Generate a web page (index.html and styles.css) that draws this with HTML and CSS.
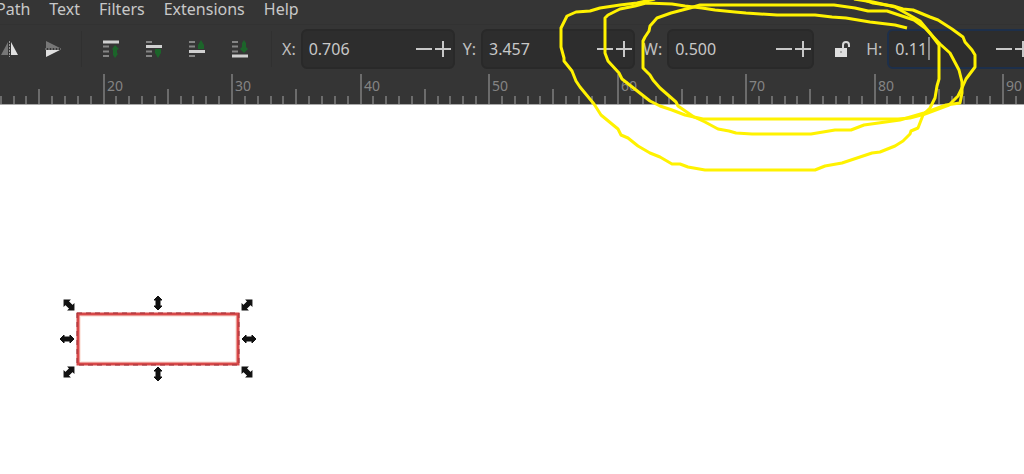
FILE: index.html
```html
<!DOCTYPE html>
<html lang="en">
<head>
    <meta charset="UTF-8">
    <meta name="viewport" content="width=device-width, initial-scale=1.0">
    <title>Drawing Editor</title>
    <link rel="stylesheet" href="styles.css">
</head>
<body>
    <nav class="menu-bar">
        <a href="#">Path</a>
        <a href="#">Text</a>
        <a href="#">Filters</a>
        <a href="#">Extensions</a>
        <a href="#">Help</a>
    </nav>

    <div class="toolbar">
        <div class="tool-group">
            <button class="tool" aria-label="Flip horizontal">
                <svg width="18" height="18" viewBox="0 0 18 18">
                    <path class="icon-dim" d="M8 2V15H1Z"/>
                    <path class="icon-light" d="M11 2V15H18Z"/>
                    <path class="icon-axis" d="M9.500 1V17"/>
                </svg>
            </button>
            <button class="tool" aria-label="Flip vertical">
                <svg width="18" height="18" viewBox="0 0 18 18">
                    <path class="icon-dim" d="M3 1V8H17Z"/>
                    <path class="icon-light" d="M3 10V17L17 10Z"/>
                    <path class="icon-axis" d="M2 9H18"/>
                </svg>
            </button>
        </div>
        <div class="tool-group order-group">
            <button class="tool" aria-label="Raise to top">
                <svg width="18" height="18" viewBox="0 0 18 18">
                    <path class="icon-rows" d="M1 6.500H7M1 11.500H7M1 16H7"/>
                    <path class="icon-bar" d="M1 2H17"/>
                    <path class="icon-arrow" d="M13 5L17 9L15 10V13L16 14L13 18L11 15V10L10 9Z"/>
                </svg>
            </button>
            <button class="tool" aria-label="Raise">
                <svg width="18" height="18" viewBox="0 0 18 18">
                    <path class="icon-rows" d="M1 2H7M1 11.500H7M1 16H7"/>
                    <path class="icon-bar" d="M1 6.500H17"/>
                    <path class="icon-arrow" d="M10 9H16V13L13 18L10 13Z"/>
                </svg>
            </button>
            <button class="tool" aria-label="Lower">
                <svg width="18" height="18" viewBox="0 0 18 18">
                    <path class="icon-rows" d="M1 2H7M1 6.500H7M1 16H7"/>
                    <path class="icon-bar" d="M1 11.500H17"/>
                    <path class="icon-arrow" d="M13 0L16 5V9H10V5Z"/>
                </svg>
            </button>
            <button class="tool" aria-label="Lower to bottom">
                <svg width="18" height="18" viewBox="0 0 18 18">
                    <path class="icon-rows" d="M1 2H7M1 6.500H7M1 11.500H7"/>
                    <path class="icon-bar" d="M1 16H17"/>
                    <path class="icon-arrow" d="M13 0L15 3V7L17 9L13 13L9 9L11 7V3Z"/>
                </svg>
            </button>
        </div>

        <div class="field">
            <label for="posX">X:</label>
            <div class="spin">
                <input type="text" id="posX" value="0.706">
                <button class="step" aria-label="Decrease X"><svg width="16" height="16"><path d="M0 8H16"/></svg></button>
                <button class="step" aria-label="Increase X"><svg width="16" height="16"><path d="M0 8H16M8 0V16"/></svg></button>
            </div>
        </div>
        <div class="field">
            <label for="posY">Y:</label>
            <div class="spin">
                <input type="text" id="posY" value="3.457">
                <button class="step" aria-label="Decrease Y"><svg width="16" height="16"><path d="M0 8H16"/></svg></button>
                <button class="step" aria-label="Increase Y"><svg width="16" height="16"><path d="M0 8H16M8 0V16"/></svg></button>
            </div>
        </div>
        <div class="field">
            <label for="sizeW">W:</label>
            <div class="spin spin-size">
                <input type="text" id="sizeW" value="0.500">
                <button class="step" aria-label="Decrease width"><svg width="16" height="16"><path d="M0 8H16"/></svg></button>
                <button class="step" aria-label="Increase width"><svg width="16" height="16"><path d="M0 8H16M8 0V16"/></svg></button>
            </div>
        </div>
        <button class="lock" aria-label="Lock width and height">
            <svg width="18" height="18" viewBox="0 0 18 18">
                <path class="lock-body" d="M1 8H13V17H1Z"/>
                <path class="lock-shackle" d="M9 9V5Q9 2 12 2Q15 2 15 5V7"/>
                <path class="lock-hole" d="M7 11V13"/>
            </svg>
        </button>
        <div class="field">
            <label for="sizeH">H:</label>
            <div class="spin spin-size active">
                <input type="text" id="sizeH" value="0.11">
                <span class="caret"></span>
                <button class="step" aria-label="Decrease height"><svg width="16" height="16"><path d="M0 8H16"/></svg></button>
                <button class="step" aria-label="Increase height"><svg width="16" height="16"><path d="M0 8H16M8 0V16"/></svg></button>
            </div>
        </div>
    </div>

    <svg class="ruler" id="ruler"></svg>

    <main class="canvas">
        <svg class="drawing" width="300" height="300">
            <defs>
                <path id="handle" d="M-7 0L-3 -4V-2H3V-4L7 0L3 4V2H-3V4Z"/>
            </defs>
            <rect class="shape-glow" x="80" y="211" width="156" height="46"/>
            <rect class="shape" x="78" y="209" width="160" height="50"/>
            <rect class="shape-bounds" x="77" y="208" width="162" height="52"/>
            <g class="handles">
                <use href="#handle" transform="translate(69 200) rotate(45)"/>
                <use href="#handle" transform="translate(158 198) rotate(90)"/>
                <use href="#handle" transform="translate(247 200) rotate(-45)"/>
                <use href="#handle" transform="translate(67 234)"/>
                <use href="#handle" transform="translate(249 234)"/>
                <use href="#handle" transform="translate(69 267) rotate(-45)"/>
                <use href="#handle" transform="translate(158 269) rotate(90)"/>
                <use href="#handle" transform="translate(247 267) rotate(45)"/>
            </g>
        </svg>
    </main>

    <!-- Pen marks over the size fields -->
    <svg class="pen-marks" width="1024" height="180">
        <path d="M655 -1L637 3L620 5L600 8L590 11L576 12L567 16L565 20L561 28V47L564 58L564 61L572 71L576 81L580 87L594 104L601 115L618 129L621 135L628 138L638 146L650 153L660 157L672 164L680 164L688 167L705 170H815L825 166L842 163L872 153L880 152L895 146L903 141L910 134L911 131L918 128L923 115L930 108L935 98L937 86L939 79V45L930 33L920 21L895 7L873 2L854 -1"/>
        <path d="M907 28L895 25L870 22L846 18L832 17L815 15H777L746 13L735 12L715 10L702 8L685 6L672 4L646 3L635 6L620 9L608 15L605 18V53L608 61L619 73L622 79L650 101L660 106L672 110L685 115L703 119H898L910 118L925 114L949 105L958 96L962 88L966 79L975 67V55L972 50L965 42L963 37L952 29L938 20L930 17L913 10L903 9L893 6L873 3L862 -1"/>
        <path d="M643 41V68L650 75L653 80L660 88L676 102L678 106L694 117L705 122L718 129L729 131L736 133L752 134H811L835 130H851L864 125L900 120L924 113L946 105L960 103L962 93V82L959 70L950 53L940 44L925 28L914 20L905 17L887 11H868L855 8L834 5H700L690 8L671 13L657 18L650 26L649 31L645 37Z"/>
    </svg>

    <script>
        const ruler = document.getElementById('ruler');
        const unit = 12.85;
        const origin = -154;
        let marks = '';

        // Long tick every 10 units, medium every 5, short for the rest
        for (let i = 12; origin + i * unit < window.innerWidth; i++) {
            const x = Math.floor(origin + i * unit);
            const top = i % 10 === 0 ? 1 : i % 5 === 0 ? 16 : 23;
            marks += `<rect x="${x}" y="${top}" width="2" height="${31 - top}"/>`;
            if (i % 10 === 0) {
                marks += `<text x="${x + 4}" y="18">${i}</text>`;
            }
        }
        ruler.innerHTML = marks;
    </script>
</body>
</html>
```

FILE: styles.css
```css
* {
    box-sizing: border-box;
    margin: 0;
    padding: 0;
    font-family: "Noto Sans", "Open Sans", sans-serif;
}

body {
    display: flex;
    flex-direction: column;
    min-height: 100vh;
    background-color: white;
    overflow: hidden;
}

.menu-bar {
    display: flex;
    gap: 19px;
    height: 24px;
    margin-left: -4px;
    background-color: #353535;
}

.menu-bar a {
    color: #c8c8c8;
    font-size: 16px;
    line-height: 18px;
    text-decoration: none;
}

.toolbar {
    display: flex;
    align-items: center;
    height: 49px;
    border-top: 1px solid #323232;
    background-color: #353535;
}

.tool-group {
    display: flex;
    flex: none;
    height: 36px;
    padding-right: 8px;
    border-right: 1px solid #303030;
    margin-left: -13px;
}

.order-group {
    padding: 0 10px 0 7px;
    margin-left: 0;
}

.tool,
.lock,
.step {
    display: flex;
    flex: none;
    align-items: center;
    justify-content: center;
    border: none;
    background: none;
}

.tool {
    width: 43px;
}

.icon-light {
    fill: #e0e0e0;
}

.icon-dim {
    fill: #777;
}

.icon-axis {
    stroke: #999;
    stroke-dasharray: 2 1;
}

.icon-rows {
    stroke: #858585;
    stroke-width: 2;
}

.icon-bar {
    stroke: #d0d0d0;
    stroke-width: 3;
}

.icon-arrow {
    fill: #1c642a;
}

.field {
    display: flex;
    flex: none;
    align-items: center;
    gap: 5px;
    margin-left: 10px;
}

.field + .field {
    margin-left: 8px;
}

.field label {
    color: #c0c0c0;
    font-size: 16px;
}

.spin {
    position: relative;
    display: flex;
    align-items: center;
    width: 154px;
    height: 40px;
    border: 2px solid #292929;
    border-radius: 6px;
    background-color: #2d2d2d;
}

.spin-size {
    width: 147px;
}

.spin.active {
    border-color: #1d2f4a;
}

.spin input {
    flex: 1;
    min-width: 0;
    height: 36px;
    padding-left: 6px;
    border: none;
    outline: none;
    background: none;
    color: #c8c8c8;
    font-size: 16px;
}

.step {
    width: 19px;
    height: 36px;
}

.step path {
    stroke: #c8c8c8;
    stroke-width: 2;
}

.caret {
    position: absolute;
    left: 39px;
    top: 6px;
    width: 2px;
    height: 23px;
    background-color: #888;
}

.lock {
    width: 34px;
    height: 36px;
    margin-left: 12px;
}

.lock + .field {
    margin-left: 6px;
}

.lock-body {
    fill: #e0e0e0;
}

.lock-shackle {
    fill: none;
    stroke: #d8d8d8;
    stroke-width: 2;
}

.lock-hole {
    stroke: #aaa;
    stroke-width: 2;
}

.ruler {
    display: block;
    width: 100%;
    height: 32px;
    border-bottom: 1px solid #aaa;
    background-color: #353535;
}

.ruler rect {
    fill: #6c6c6c;
}

.ruler text {
    fill: #848484;
    font-size: 14px;
}

.canvas {
    flex: 1;
    background-color: white;
}

.drawing {
    display: block;
}

.shape,
.shape-glow,
.shape-bounds {
    fill: none;
}

.shape {
    stroke: #d84848;
    stroke-width: 3;
}

.shape-glow {
    stroke: #fdeae4;
    stroke-width: 2;
}

.shape-bounds {
    stroke: #9c3038;
    stroke-dasharray: 5 4;
}

.handles {
    fill: #111;
    stroke: #111;
}

.pen-marks {
    position: absolute;
    left: 0;
    top: 0;
    fill: none;
    stroke: #fff200;
    stroke-width: 3;
    stroke-linejoin: round;
    pointer-events: none;
}
```
